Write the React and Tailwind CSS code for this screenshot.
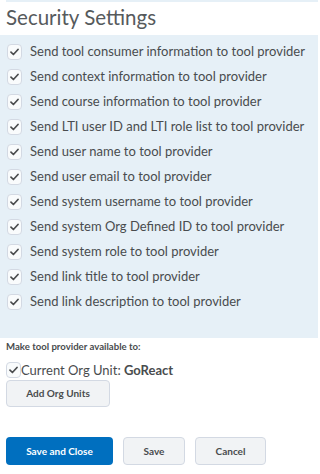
import React from 'react';

const items = [
  'Send tool consumer information to tool provider',
  'Send context information to tool provider',
  'Send course information to tool provider',
  'Send LTI user ID and LTI role list to tool provider',
  'Send user name to tool provider',
  'Send user email to tool provider',
  'Send system username to tool provider',
  'Send system Org Defined ID to tool provider',
  'Send system role to tool provider',
  'Send link title to tool provider',
  'Send link description to tool provider',
];

const Check = () => (
  <span className="flex h-[16px] w-[15px] shrink-0 items-center justify-center rounded-[4px] border border-[#d3d9e3] bg-[#f9fbfc]">
    <svg width="9" height="8" viewBox="0 0 9 8" fill="none">
      <path d="M1 4.2 L3.4 6.5 L8 1.5" stroke="#4a4c4e" strokeWidth="1.7" strokeLinecap="round" strokeLinejoin="round" />
    </svg>
  </span>
);

export default function App() {
  return (
    <div className="w-[318px] h-[474px] overflow-hidden bg-white text-[#494c4e]" style={{ fontFamily: 'Lato, "Open Sans", sans-serif' }}>
      <div className="ml-[6px] h-[2px] bg-[#e6f0f7]" />
      <h2 className="pl-[6px] text-[20.5px] leading-[30px] font-normal text-[#565a5c]">Security Settings</h2>
      <div className="mt-[3px] h-[303px] bg-[#e6f0f7] pt-[4px]">
        <ul className="flex flex-col">
          {items.map((t) => (
            <li key={t} className="flex h-[25px] items-center gap-[8px] whitespace-nowrap pl-[7px] text-[13px] text-[#494c4e]">
              <Check />
              <span>{t}</span>
            </li>
          ))}
        </ul>
      </div>
      <div className="px-[6px]">
        <p className="mt-[2px] text-[9.6px] font-bold leading-[14px] text-[#494c4e]">Make tool provider available to:</p>
        <div className="mt-[8px] flex items-center whitespace-nowrap text-[13px] leading-[16px]">
          <Check />
          <span>Current Org Unit: <b className="font-bold">GoReact</b></span>
        </div>
        <button className="mt-[2px] h-[27px] w-[104px] rounded-[4px] border border-[#d3d9e3] bg-[#f1f3f5] text-[10px] font-bold text-[#494c4e]">Add Org Units</button>
        <div className="mt-[30px] flex gap-[10px]">
          <button className="h-[28px] w-[107px] rounded-[4px] bg-[#006fbf] text-[10px] font-bold text-white">Save and Close</button>
          <button className="h-[28px] w-[62px] rounded-[4px] border border-[#d3d9e3] bg-[#f1f3f5] text-[10px] font-bold text-[#494c4e]">Save</button>
          <button className="h-[28px] w-[71px] rounded-[4px] border border-[#d3d9e3] bg-[#f1f3f5] text-[10px] font-bold text-[#494c4e]">Cancel</button>
        </div>
      </div>
    </div>
  );
}
